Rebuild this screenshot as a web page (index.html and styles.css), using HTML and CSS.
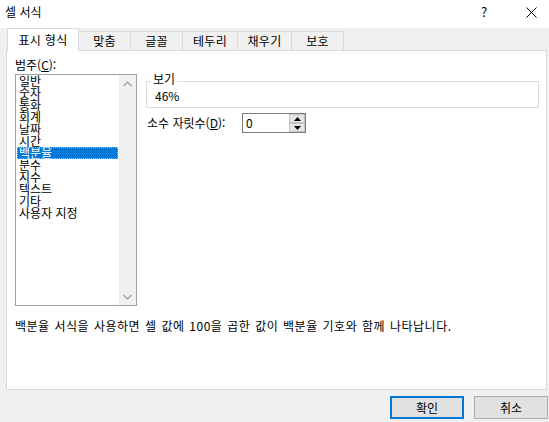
FILE: index.html
```html
<!DOCTYPE html>
<html lang="ko">
  <head>
    <meta charset="UTF-8" />
    <title>셀 서식</title>
    <link rel="stylesheet" href="styles.css">
  </head>
  <body>
    <div class="titlebar">
      <span class="title">셀 서식</span>
      <span class="help">?</span>
      <span class="close">
        <svg width="11" height="11" viewBox="0 0 11 11">
          <path d="M0.5 0.5 L10.5 10.5 M10.5 0.5 L0.5 10.5" stroke="#000" stroke-width="1" fill="none" />
        </svg>
      </span>
    </div>

    <div class="tabs">
      <div class="tab active">표시 형식</div>
      <div class="tab w52">맞춤</div>
      <div class="tab w52">글꼴</div>
      <div class="tab w55">테두리</div>
      <div class="tab w54">채우기</div>
      <div class="tab w52">보호</div>
    </div>

    <div class="panel">
      <div class="columns">
        <div class="category">
          <div class="label">범주(<u>C</u>):</div>
          <div class="listbox">
            <ul class="items">
              <li>일반</li>
              <li>숫자</li>
              <li>통화</li>
              <li>회계</li>
              <li>날짜</li>
              <li>시간</li>
              <li class="selected">백분율</li>
              <li>분수</li>
              <li>지수</li>
              <li>텍스트</li>
              <li>기타</li>
              <li>사용자 지정</li>
            </ul>
            <div class="scrollbar">
              <svg width="17" height="17" viewBox="0 0 17 17">
                <polyline points="4.5,11 8.5,7 12.5,11" stroke="#a3a3a3" stroke-width="1.5" fill="none" />
              </svg>
              <svg width="17" height="17" viewBox="0 0 17 17">
                <polyline points="4.5,7 8.5,11 12.5,7" stroke="#a3a3a3" stroke-width="1.5" fill="none" />
              </svg>
            </div>
          </div>
        </div>

        <div class="options">
          <div class="group">
            <span class="group-title">보기</span>
            <div class="sample">46%</div>
          </div>
          <div class="decimals">
            <span class="decimals-label">소수 자릿수(<u>D</u>):</span>
            <div class="spin">
              <span class="spin-value">0</span>
              <div class="spin-buttons">
                <div class="spin-btn">
                  <svg width="7" height="4" viewBox="0 0 7 4"><polygon points="0,4 3.5,0 7,4" fill="#000" /></svg>
                </div>
                <div class="spin-btn">
                  <svg width="7" height="4" viewBox="0 0 7 4"><polygon points="0,0 3.5,4 7,0" fill="#000" /></svg>
                </div>
              </div>
            </div>
          </div>
        </div>
      </div>

      <p class="desc">백분율 서식을 사용하면 셀 값에 100을 곱한 값이 백분율 기호와 함께 나타납니다.</p>
    </div>

    <div class="footer">
      <button class="btn default">확인</button>
      <button class="btn">취소</button>
    </div>
  </body>
</html>
```

FILE: styles.css
```css
body {
  margin: 0;
  width: 549px;
  height: 422px;
  overflow: hidden;
  background-color: #f0f0f0;
  font-family: "Noto Sans CJK KR", "Liberation Sans", sans-serif;
  font-size: 12px;
  color: #000;
}
u {
  text-decoration-thickness: 1px;
  text-underline-offset: 1px;
}
.titlebar {
  height: 28px;
  background: #fff;
  display: flex;
  align-items: flex-start;
  padding: 5px 0 0 5px;
  box-sizing: border-box;
  line-height: 14px;
}
.title {
  flex: 1;
}
.help {
  width: 12px;
  text-align: center;
  font-size: 13px;
  margin-right: 36px;
}
.close {
  width: 11px;
  padding-top: 2px;
  margin-right: 12px;
  display: flex;
}
.tabs {
  height: 22px;
  display: flex;
  align-items: flex-end;
  padding-left: 7px;
}
.tab {
  height: 19px;
  box-sizing: border-box;
  border: 1px solid #d9d9d9;
  border-left: none;
  border-bottom: none;
  display: flex;
  align-items: center;
  justify-content: center;
  line-height: 14px;
  letter-spacing: 0.3px;
  background: #f0f0f0;
}
.tab.active {
  width: 72px;
  height: 23px;
  margin-bottom: -1px;
  border-left: 1px solid #d9d9d9;
  background: #fff;
  position: relative;
  z-index: 1;
}
.w52 {
  width: 52px;
}
.w54 {
  width: 54px;
}
.w55 {
  width: 55px;
}
.panel {
  margin-left: 6px;
  width: 541px;
  height: 340px;
  box-sizing: border-box;
  border: 1px solid #d9d9d9;
  background: #fff;
}
.columns {
  display: flex;
}
.category {
  padding: 7px 0 0 8px;
}
.label {
  line-height: 14px;
  margin-bottom: 2px;
}
.listbox {
  width: 122px;
  height: 232px;
  box-sizing: border-box;
  border: 1px solid #a0a0a0;
  display: flex;
}
.items {
  list-style: none;
  margin: 0;
  padding: 0 1px;
  flex: 1;
}
.items li {
  height: 12px;
  line-height: 12px;
  padding-left: 2px;
  white-space: nowrap;
}
.items li.selected {
  background: #0078d7;
  color: #fff;
  outline: 1px dotted #8fc3ee;
  outline-offset: -1px;
}
.scrollbar {
  width: 17px;
  background: #f0f0f0;
  display: flex;
  flex-direction: column;
  justify-content: space-between;
}
.options {
  margin: 30px 0 0 9px;
}
.group {
  width: 393px;
  height: 27px;
  box-sizing: border-box;
  border: 1px solid #dcdcdc;
  position: relative;
  padding: 7px 0 0 8px;
}
.group-title {
  position: absolute;
  top: -10px;
  left: 4px;
  padding: 0 2px;
  background: #fff;
  line-height: 14px;
}
.sample {
  line-height: 14px;
}
.decimals {
  display: flex;
  align-items: center;
  margin-top: 5px;
  padding-left: 1px;
}
.decimals-label {
  width: 95px;
  line-height: 14px;
}
.spin {
  width: 64px;
  height: 20px;
  box-sizing: border-box;
  border: 1px solid #7a7a7a;
  display: flex;
  align-items: center;
}
.spin-value {
  flex: 1;
  padding-left: 3px;
  line-height: 14px;
}
.spin-buttons {
  width: 16px;
  height: 18px;
  display: flex;
  flex-direction: column;
}
.spin-btn {
  flex: 1;
  background: #e5e5e5;
  border: 1px solid #c4c4c4;
  box-sizing: border-box;
  display: flex;
  align-items: center;
  justify-content: center;
}
.desc {
  margin: 13px 0 0 8px;
  line-height: 14px;
  letter-spacing: 0.5px;
  word-spacing: 1px;
}
.footer {
  display: flex;
  justify-content: flex-end;
  gap: 10px;
  margin-top: 6px;
  padding-right: 1px;
}
.btn {
  width: 74px;
  height: 23px;
  box-sizing: border-box;
  border: 1px solid #adadad;
  background: #e1e1e1;
  font-family: inherit;
  font-size: 12px;
  padding: 0;
  line-height: 14px;
}
.btn.default {
  border: 2px solid #0078d7;
}
```
